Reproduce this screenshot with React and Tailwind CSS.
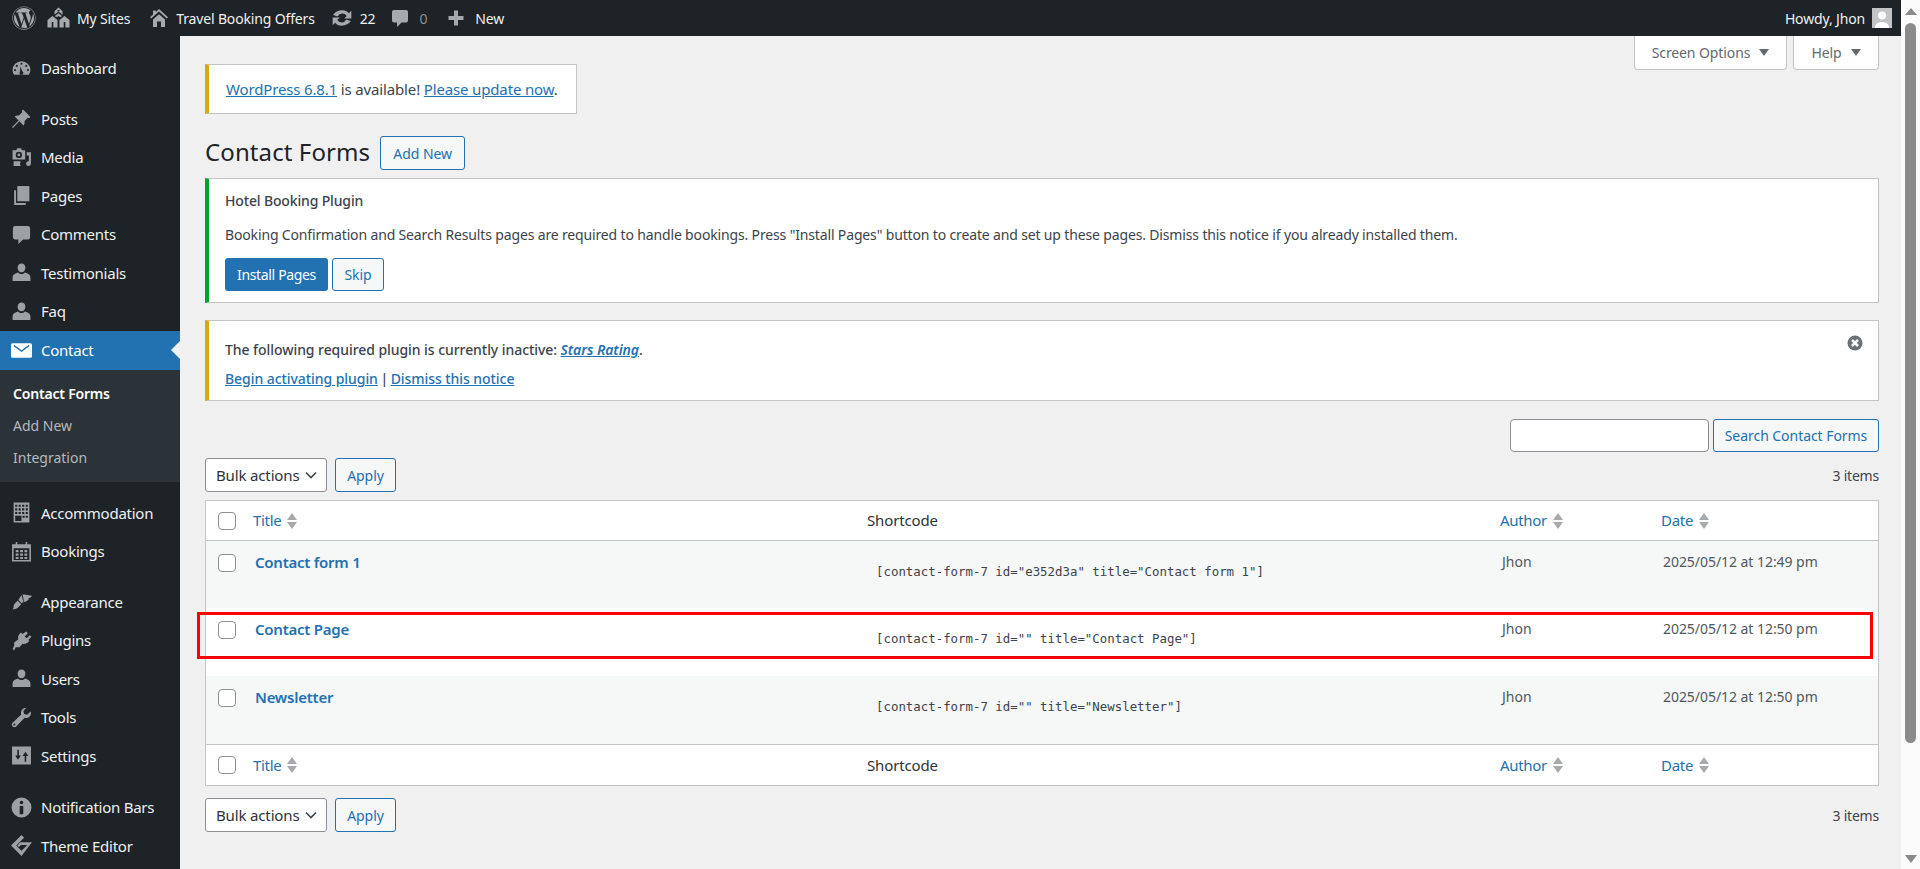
import React from "react";
import { FaWordpress } from "react-icons/fa";

const font = "font-['Noto_Sans',sans-serif]";

const Sv = ({ children, className = "w-[21px] h-[21px] fill-[#9ca1a6]" }) => (
  <svg viewBox="0 0 20 20" className={className}>{children}</svg>
);
const IDash = () => <Sv><path d="M10 3a8.500 8.500 0 0 0-8.500 8.500c0 1.700.5 3.200 1.400 4.500h14.200a8.500 8.500 0 0 0 1.400-4.500A8.500 8.500 0 0 0 10 3zM10 4.500a1 1 0 1 1 0 2 1 1 0 0 1 0-2zM5.500 6.500a1 1 0 1 1 0 2 1 1 0 0 1 0-2zm9 0a1 1 0 1 1 0 2 1 1 0 0 1 0-2zM3.800 10.500a1 1 0 1 1 0 2 1 1 0 0 1 0-2zm12.400 0a1 1 0 1 1 0 2 1 1 0 0 1 0-2zM9 8l1.700 4.600a1.800 1.800 0 1 1-2.200.5z" fillRule="evenodd" /></Sv>;
const IPin = () => <Sv><path d="M11.500 1.500l7 7-1.300 1.300-1.200-.5-3.200 3.200c.4 1.500.1 3-.9 4.100L8 12.700 1.800 19 1 18.200 7.300 12 3.400 8.100c1.100-1 2.700-1.300 4.100-.9l3.200-3.200-.5-1.200z" /></Sv>;
const IMedia = () => <Sv><path d="M1.500 3h3.500l1-1.700h3.500L10.500 3h3v9h-12zm6 1.500a3 3 0 1 0 0 6 3 3 0 0 0 0-6zm0 1.700a1.300 1.300 0 1 1 0 2.600 1.300 1.300 0 0 1 0-2.600z" fillRule="evenodd" /><path d="M15 5h4v10.800a2.300 2.300 0 1 1-2-2.300V8h-2zM2.500 13.500H9v1a2.800 2.800 0 0 0 .4 3.500H2.500z" /></Sv>;
const IPages = () => <Sv><path d="M6 1h11.500v14.500H6z" /><path d="M3 5h1.800v12.200H14V19H3z" /></Sv>;
const IComment = () => <Sv><path d="M4 2h12a2.200 2.200 0 0 1 2.200 2.200v8.300a2.200 2.200 0 0 1-2.200 2.200h-4.500L7 19v-4.300H4a2.200 2.200 0 0 1-2.200-2.200V4.200A2.200 2.200 0 0 1 4 2z" /></Sv>;
const IUser = () => <Sv><path d="M10 1.500a3.700 3.700 0 0 1 3.700 3.900c0 2.300-1.600 4.400-3.700 4.400S6.300 7.700 6.300 5.400A3.700 3.700 0 0 1 10 1.500zM6.800 10c.8 1 2 1.500 3.200 1.500s2.400-.5 3.200-1.500c3 .6 5.300 2.100 5.300 4.500V18h-17v-3.500c0-2.400 2.300-3.900 5.300-4.500z" /></Sv>;
const IMail = () => <Sv className="w-[21px] h-[21px] fill-white"><path d="M1.500 3h17A1.500 1.500 0 0 1 20 4.500v11a1.500 1.500 0 0 1-1.500 1.500h-17A1.500 1.500 0 0 1 0 15.500v-11A1.500 1.500 0 0 1 1.500 3zM2.300 5.800L10 11.500l7.700-5.700-.9-1L10 9.700 3.200 4.800z" fillRule="evenodd" /></Sv>;
const IBuilding = () => <Sv><path d="M2.500 0.500h15v19h-15zM4 2.500v2h2v-2zm3.300 0v2h2v-2zm3.300 0v2h2v-2zm3.400 0v2h2v-2zM4 6v2h2V6zm3.300 0v2h2V6zm3.300 0v2h2V6zM14 6v2h2V6zM4 9.500v2h2v-2zm3.300 0v2h2v-2zm3.300 0v2h2v-2zm3.400 0v2h2v-2zM4 13v5h6v-5zm7 0v2h2v-2zm3 0v2h2v-2z" fillRule="evenodd" /></Sv>;
const ICal = () => <Sv><path d="M1 3h3.500V1h1.500v2h8V1h1.500v2H19v16.500H1zM2.500 7v11h15V7zm2 1.500h2.700v2.200H4.500zm4.200 0h2.700v2.200H8.700zm4.100 0h2.700v2.200h-2.700zm-8.300 3.400h2.700v2.200H4.500zm4.200 0h2.700v2.200H8.700zm4.100 0h2.700v2.200h-2.700zm-8.300 3.300h2.700v2H4.500zm4.200 0h2.700v2H8.700zm4.100 0h2.700v2h-2.700z" fillRule="evenodd" /></Sv>;
const IBrush = () => <Sv><path d="M11 3l9 1.500c-1 1.800-3 2.500-4 3 .5 0 1 .3 1 .3-1 1.300-2.700 2.300-4.500 2.700zM10 3.800l2 7-2 .7L7 8.500zM6.300 9.200L9.800 12.500 6.500 16c-1.200 1.200-3.600 1.500-5 1.500.8-1 1-2 1-3 0-1 .5-2 1.300-2.800z" /></Sv>;
const IPlug = () => <Sv><path d="M14.500 1.500l1.600 1.600-3 3 1.800 1.800 3-3 1.600 1.600-3 3 1 1-1 1c-1.200 1.200-3.500 2.500-5.500 1.500L8 16.500H4.500L3 19.500 1.500 18l1.500-3v-3l4-3.200c-1-2 .3-4.300 1.500-5.500l1-1 1.500 1.500z" /></Sv>;
const IWrench = () => <Sv><path d="M14 1c-2.500 0-4.500 2-4.500 4.500 0 .6.100 1.100.3 1.600L1.500 15c-1 1-1 2.500 0 3.500s2.500 1 3.500 0l8-8.300c.5.200 1 .3 1.500.3 2.500 0 4.500-2 4.500-4.500 0-.7-.2-1.300-.4-1.800l-3.200 3.100-2.900-.7-.7-2.900 3.100-3.200C15.400 1.100 14.700 1 14 1zM3.200 15.700a1 1 0 1 1 0 2 1 1 0 0 1 0-2z" fillRule="evenodd" /></Sv>;
const ISet = () => <Sv><path d="M1 1.500h18v17H1zM6 4.500v5.500H4l2.700 4 2.700-4H7.500V4.500zm7 11.500h1.500v-5.500h2l-2.700-4-2.800 4h2z" fillRule="evenodd" /></Sv>;
const IInfo = () => <Sv><path d="M10 .5a9.500 9.500 0 1 1 0 19 9.500 9.500 0 0 1 0-19zm0 3a1.700 1.700 0 1 0 0 3.400 1.700 1.700 0 0 0 0-3.400zM8.300 8.500V16.500h3.400V8.500z" fillRule="evenodd" /></Sv>;
const IDiamond = () => <Sv><path d="M10 0l2.500 2.500L5 10l5 5 5.500-5.500h-6l-2 2L6 10l3-3h11L10 20 0 10z" /></Sv>;

const IHouses = () => <svg viewBox="0 0 23 22" className="w-[23px] h-[22px] fill-[#a7aaad]"><path d="M11.500 0.500l4 3.700v3.500l-4-3.200-4 3.200V4.200zM10.500 3v1.300h2V3zM5.500 9l5 4v7.500H.5V13zM4.700 15v5.500h1.700V15zM17.500 9l5 4v7.500h-10V13zM16.700 15v5.500h1.700V15zM11.500 6.300l3.800 3-2.300.8-1.500-1.200-1.500 1.200-2.300-.8z" fillRule="evenodd" /></svg>;
const IHome = () => <svg viewBox="0 0 20 20" className="w-5 h-5 fill-[#a7aaad]"><path d="M10 1l9 8.300-1.200 1.300L10 3.500 2.200 10.600 1 9.300 4 6.600V2.500h2.800V4zM4 11.500l6-5.300 6 5.300V19h-4v-5.500H8V19H4z" /></svg>;
const IUpdate = () => <svg viewBox="0 0 20 20" className="w-[22px] h-[22px] fill-[#a7aaad]"><path d="M10.500 3c2.400 0 4.400 1 5.700 2.700L18.500 3.500v7H12l2.300-2.300a4.700 4.700 0 0 0-8.200.4L2 7.200C3.300 4.800 6.700 3 10.500 3zM1.500 9.500H8l-2.300 2.300a4.700 4.700 0 0 0 8.200-.4l4.100 1.400C16.700 15.200 13.300 17 9.500 17c-2.400 0-4.400-1-5.700-2.700L1.500 16.500z" /></svg>;
const ICommentBar = () => <svg viewBox="0 0 20 20" className="w-5 h-5 fill-[#a7aaad]"><path d="M4 2h12a2 2 0 0 1 2 2v8.500a2 2 0 0 1-2 2h-4.500L7 19v-4.500H4a2 2 0 0 1-2-2V4a2 2 0 0 1 2-2z" /></svg>;
const IPlus = () => <svg viewBox="0 0 20 20" className="w-5 h-5 fill-[#a7aaad]"><path d="M8 2.500h4V8h5.500v4H12v5.500H8V12H2.500V8H8z" /></svg>;

const Sorter = () => (
  <span className="ml-[6px] inline-flex flex-col gap-[2px]">
    <span className="w-0 h-0 border-x-[5px] border-x-transparent border-b-[7px] border-b-[#a7aaad]" />
    <span className="w-0 h-0 border-x-[5px] border-x-transparent border-t-[7px] border-t-[#a7aaad]" />
  </span>
);

const Check = () => <span className="block w-[18px] h-[18px] shrink-0 bg-white border border-[#8c8f94] rounded-[4px]" />;

const BtnO = ({ children, className = "" }) => (
  <button className={`h-[33px] border border-[#2271b1] rounded-[3px] bg-[#f6f7f7] text-[#2271b1] text-[14px] tracking-[-0.05px] ${className}`}>{children}</button>
);

const Side = ({ icon, label, h = "h-[38.5px]" }) => (
  <div className={`${h} flex items-center text-[#f0f0f1] text-[15px] tracking-[-0.25px]`}>
    <span className="w-[41px] flex justify-center pl-[1px]">{icon}</span>
    <span>{label}</span>
  </div>
);

const BulkBar = () => (
  <div className="flex items-center justify-between h-[34px]">
    <div className="flex items-center gap-[8px]">
      <div className="w-[122px] h-[34px] pl-[10px] pr-[9px] flex items-center justify-between bg-white border border-[#8c8f94] rounded-[3px] text-[15px] tracking-[-0.15px] text-[#2c3338]">
        <span>Bulk actions</span>
        <svg viewBox="0 0 12 8" className="w-[12px] h-[8px] fill-none stroke-[#3c434a] stroke-[1.6]"><path d="M1 1.500l5 5 5-5" /></svg>
      </div>
      <BtnO className="w-[61px] h-[34px]">Apply</BtnO>
    </div>
    <span className="text-[14px] text-[#3c434a] tracking-[-0.2px]">3 items</span>
  </div>
);

const HeadRow = ({ border, h }) => (
  <div className={`flex items-center ${h} text-[15px] tracking-[-0.3px] bg-white ${border}`}>
    <span className="w-[47px] pl-[12px]"><Check /></span>
    <span className="w-[614px] flex items-center text-[#2271b1]">Title<Sorter /></span>
    <span className="w-[633px] text-[#2c3338] tracking-[-0.15px]">Shortcode</span>
    <span className="w-[161px] flex items-center text-[#2271b1]">Author<Sorter /></span>
    <span className="flex items-center text-[#2271b1]">Date<Sorter /></span>
  </div>
);

const Row = ({ title, code, date, alt, h, children }) => (
  <div className={`relative flex ${h} ${alt ? "bg-[#f6f7f7]" : "bg-white"}`}>
    <span className="w-[47px] pl-[12px] pt-[13px]"><Check /></span>
    <a className="w-[623px] pl-[2px] pt-[10px] text-[15px] font-semibold tracking-[-0.25px] text-[#2271b1] leading-[22px]">{title}</a>
    <span className="w-[626px] pt-[20px] text-[12.4px] leading-[22px] text-[#3c434a] font-['DejaVu_Sans_Mono',monospace] whitespace-pre">{code}</span>
    <span className="w-[161px] pt-[10px] text-[14px] leading-[22px] text-[#50575e]">Jhon</span>
    <span className="pt-[10px] text-[14px] leading-[22px] text-[#50575e] tracking-[-0.05px]">{date}</span>
    {children}
  </div>
);

export default function App() {
  return (
    <div className={`flex h-screen overflow-hidden bg-[#f0f0f1] ${font}`}>
      <div className="flex-1 min-w-0 flex flex-col">
        <header className="h-[36px] shrink-0 bg-[#1d2327] flex items-center text-[#f0f0f1] text-[14px] tracking-[-0.15px]">
          <span className="w-[47px] flex justify-center pl-[1px]"><FaWordpress className="w-[24px] h-[24px] text-[#a7aaad]" /></span>
          <span className="flex items-center gap-[7px] mr-[19px]"><IHouses />My Sites</span>
          <span className="flex items-center gap-[7px] mr-[16px]"><IHome />Travel Booking Offers</span>
          <span className="flex items-center gap-[7px] mr-[15px]"><IUpdate />22</span>
          <span className="flex items-center gap-[9px] mr-[17px] text-[#8c8f94]"><ICommentBar />0</span>
          <span className="flex items-center gap-[9px] ml-[2px]"><IPlus />New</span>
          <span className="ml-auto flex items-center gap-[7px] pr-[9px]">
            Howdy, Jhon
            <span className="w-[20px] h-[20px] bg-[#c3c4c7] flex items-end justify-center overflow-hidden">
              <svg viewBox="0 0 20 20" className="w-[20px] h-[20px] fill-white"><circle cx="10" cy="7.500" r="4" /><path d="M3 20c0-4 3-6 7-6s7 2 7 6z" /></svg>
            </span>
          </span>
        </header>

        <div className="flex-1 min-h-0 flex">
          <nav className="w-[180px] shrink-0 bg-[#1d2327] pt-[13px]">
            <Side icon={<IDash />} label="Dashboard" />
            <div className="h-[12px]" />
            <Side icon={<IPin />} label="Posts" />
            <Side icon={<IMedia />} label="Media" />
            <Side icon={<IPages />} label="Pages" />
            <Side icon={<IComment />} label="Comments" />
            <Side icon={<IUser />} label="Testimonials" />
            <Side icon={<IUser />} label="Faq" />
            <div className="relative h-[39px] bg-[#2271b1] flex items-center text-white text-[15px] tracking-[-0.25px]">
              <span className="w-[41px] flex justify-center pl-[1px]"><IMail /></span>
              Contact
              <span className="absolute right-0 top-[10px] w-0 h-0 border-y-[9px] border-y-transparent border-r-[9px] border-r-[#f0f0f1]" />
            </div>
            <div className="bg-[#2c3338] h-[112px] pt-[8px] text-[14px]">
              <div className="h-[32px] pl-[13px] flex items-center text-white font-semibold tracking-[-0.2px]">Contact Forms</div>
              <div className="h-[32px] pl-[13px] flex items-center text-[#b4b9be]">Add New</div>
              <div className="h-[32px] pl-[13px] flex items-center text-[#b4b9be]">Integration</div>
            </div>
            <div className="h-[12px]" />
            <Side icon={<IBuilding />} label="Accommodation" />
            <Side icon={<ICal />} label="Bookings" />
            <div className="h-[12px]" />
            <Side h="h-[38.5px]" icon={<IBrush />} label="Appearance" />
            <Side h="h-[38.5px]" icon={<IPlug />} label="Plugins" />
            <Side h="h-[38.5px]" icon={<IUser />} label="Users" />
            <Side h="h-[38.5px]" icon={<IWrench />} label="Tools" />
            <Side h="h-[38.5px]" icon={<ISet />} label="Settings" />
            <div className="h-[13px]" />
            <Side icon={<IInfo />} label="Notification Bars" />
            <Side icon={<IDiamond />} label="Theme Editor" />
          </nav>

          <main className="flex-1 min-w-0 relative pl-[25px] pr-[22px]">
            <div className="absolute right-[22px] top-0 flex gap-[6px] text-[14px] tracking-[-0.1px] text-[#646970]">
              <div className="w-[153px] h-[34px] bg-white border border-t-0 border-[#c3c4c7] rounded-b-[4px] flex items-center justify-center gap-[9px]">
                Screen Options
                <span className="w-0 h-0 border-x-[5px] border-x-transparent border-t-[7px] border-t-[#646970]" />
              </div>
              <div className="w-[86px] h-[34px] bg-white border border-t-0 border-[#c3c4c7] rounded-b-[4px] flex items-center justify-center gap-[9px]">
                Help
                <span className="w-0 h-0 border-x-[5px] border-x-transparent border-t-[7px] border-t-[#646970]" />
              </div>
            </div>

            <div className="mt-[28px] w-[372px] h-[50px] flex items-center bg-white border border-[#c3c4c7] border-l-4 border-l-[#dba617] pl-[17px] text-[15px] tracking-[-0.15px] text-[#3c434a]">
              <span><a className="underline text-[#2271b1]">WordPress 6.8.1</a> is available! <a className="underline text-[#2271b1]">Please update now</a>.</span>
            </div>

            <div className="flex items-center gap-[10px] mt-[22px] h-[34px]">
              <h1 className="text-[24px] tracking-[0.1px] text-[#1d2327] font-normal leading-[30px] -mt-[2px]">Contact Forms</h1>
              <BtnO className="w-[85px] h-[34px]">Add New</BtnO>
            </div>

            <section className="mt-[8px] h-[125px] bg-white border border-[#c3c4c7] border-l-4 border-l-[#00a32a] pl-[16px] pt-[11px] text-[14px] tracking-[-0.15px] text-[#3c434a]">
              <p className="font-medium leading-[22px]">Hotel Booking Plugin</p>
              <p className="mt-[12px] leading-[22px]">Booking Confirmation and Search Results pages are required to handle bookings. Press "Install Pages" button to create and set up these pages. Dismiss this notice if you already installed them.</p>
              <div className="flex gap-[4px] mt-[12px]">
                <button className="w-[103px] h-[33px] rounded-[3px] bg-[#2271b1] text-white tracking-[-0.35px]">Install Pages</button>
                <BtnO className="w-[52px]">Skip</BtnO>
              </div>
            </section>

            <section className="relative mt-[17px] h-[81px] bg-white border border-[#c3c4c7] border-l-4 border-l-[#dba617] pl-[16px] pt-[18px] text-[14px] tracking-[-0.06px] text-[#3c434a] font-medium">
              <p className="leading-[22px]">The following required plugin is currently inactive: <a className="italic font-semibold underline text-[#2271b1]">Stars Rating</a>.</p>
              <p className="leading-[22px] mt-[7px]"><a className="underline text-[#2271b1]">Begin activating plugin</a><span className="mx-[-1px]"> | </span><a className="underline text-[#2271b1]">Dismiss this notice</a></p>
              <svg viewBox="0 0 20 20" className="absolute right-[13px] top-[12px] w-[20px] h-[20px]"><circle cx="10" cy="10" r="7.500" fill="#6b7077" /><path d="M7 7l6 6M13 7l-6 6" stroke="#fff" strokeWidth="2.500" /></svg>
            </section>

            <div className="flex justify-end gap-[4px] mt-[18px]">
              <div className="w-[199px] h-[33px] bg-white border border-[#8c8f94] rounded-[4px]" />
              <BtnO className="w-[166px]">Search Contact Forms</BtnO>
            </div>

            <div className="mt-[6px]"><BulkBar /></div>

            <div className="mt-[8px] border border-[#c3c4c7]">
              <HeadRow h="h-[40px]" border="border-b border-[#c3c4c7]" />
              <Row title="Contact form 1" code={'[contact-form-7 id="e352d3a" title="Contact form 1"]'} date="2025/05/12 at 12:49 pm" alt h="h-[67px]" />
              <Row title="Contact Page" code={'[contact-form-7 id="" title="Contact Page"]'} date="2025/05/12 at 12:50 pm" h="h-[68px]">
                <span className="absolute left-[-9px] top-[4px] w-[1676px] h-[47px] border-[3px] border-[#ff0000]" />
              </Row>
              <Row title="Newsletter" code={'[contact-form-7 id="" title="Newsletter"]'} date="2025/05/12 at 12:50 pm" alt h="h-[68px]" />
              <HeadRow h="h-[41px]" border="border-t border-[#c3c4c7]" />
            </div>

            <div className="mt-[12px]"><BulkBar /></div>
          </main>
        </div>
      </div>

      <aside className="w-[19px] shrink-0 bg-[#fbfbfb] flex flex-col items-center pt-[8px] pb-[6px]">
        <span className="w-0 h-0 border-x-[6px] border-x-transparent border-b-[7px] border-b-[#8b8b8b]" />
        <span className="w-[11px] h-[720px] mt-[8px] rounded-[6px] bg-[#8b8b8b]" />
        <span className="mt-auto w-0 h-0 border-x-[6px] border-x-transparent border-t-[8px] border-t-[#8b8b8b]" />
      </aside>
    </div>
  );
}
